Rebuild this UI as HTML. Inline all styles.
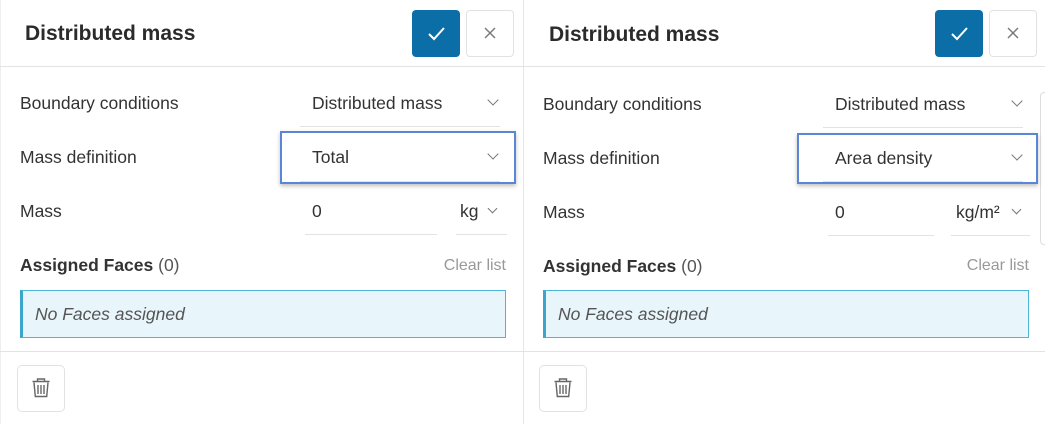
<!DOCTYPE html>
<html><head><style>
*{margin:0;padding:0;box-sizing:border-box}
body{width:1045px;height:424px;background:#fff;position:relative;overflow:hidden;font-family:"Liberation Sans",sans-serif;color:#333}
.a{position:absolute}
.t{position:absolute;font-size:17.5px;line-height:20px;color:#333;white-space:nowrap}
.title{font-size:21px;font-weight:bold;color:#2b2b2b}
.ul{position:absolute;height:1px;background:#e3e3e3}
.chev{position:absolute;width:8px;height:8px;border-right:1.3px solid #777;border-bottom:1.3px solid #777;transform:rotate(45deg)}
.hl{position:absolute;border:2.5px solid #5b86d6;box-shadow:0 2px 4px rgba(0,0,0,.25)}
.ok{position:absolute;background:#0b6ea6;border-radius:4px;width:48px;height:47px}
.x{position:absolute;border:1px solid #e2e2e2;border-radius:4px;width:48px;height:47px}
.box{position:absolute;background:#e8f5fb;border:1px solid #4db6d8;border-left:3px solid #3aa6cc;height:48px}
.box span{position:absolute;left:12px;top:13px;font-style:italic;color:#555;font-size:17.5px}
.trash{position:absolute;border:1px solid #e2e2e2;border-radius:5px;width:48px;height:47px}
.cl{position:absolute;font-size:16px;color:#999;text-align:right;width:100px;line-height:20px}
</style></head><body>
<div class="a" style="left:523px;top:0;width:1px;height:424px;background:#e6e6e6"></div>
<div class="a" style="left:0;top:0;width:1px;height:424px;background:#eee"></div>
<div class="a" style="left:0;top:66px;width:1045px;height:1px;background:#e3e3e3"></div>
<div class="a" style="left:0;top:351px;width:1045px;height:1px;background:#e3e3e3"></div>
<div class="a" style="left:1040px;top:92px;width:8px;height:153px;border:1px solid #ddd;border-radius:6px"></div>

<!-- left panel -->
<div class="t title" style="left:25px;top:24px">Distributed mass</div>
<div class="ok" style="left:412px;top:10px"><svg width="48" height="47"><path d="M17 24l5 5 10-11" stroke="#fff" stroke-width="2" fill="none"/></svg></div>
<div class="x" style="left:466px;top:10px"><svg width="46" height="45"><path d="M18 17l10 10M28 17l-10 10" stroke="#777" stroke-width="1.4"/></svg></div>
<div class="t" style="left:20px;top:93px">Boundary conditions</div>
<div class="t" style="left:312px;top:93px">Distributed mass</div>
<div class="chev" style="left:489px;top:96px"></div>
<div class="ul" style="left:300px;top:126px;width:200px"></div>
<div class="t" style="left:20px;top:147px">Mass definition</div>
<div class="hl" style="left:280px;top:131px;width:236px;height:53px"></div>
<div class="t" style="left:312px;top:147px">Total</div>
<div class="chev" style="left:489px;top:150px"></div>
<div class="ul" style="left:300px;top:181px;width:200px"></div>
<div class="t" style="left:20px;top:201px">Mass</div>
<div class="t" style="left:312px;top:201px">0</div>
<div class="ul" style="left:305px;top:234px;width:132px"></div>
<div class="t" style="left:460px;top:201px">kg</div>
<div class="chev" style="left:489px;top:205px;width:7px;height:7px"></div>
<div class="ul" style="left:456px;top:234px;width:51px"></div>
<div class="t" style="left:20px;top:255px"><b>Assigned Faces</b> <span style="color:#555">(0)</span></div>
<div class="cl" style="left:406px;top:256px">Clear list</div>
<div class="box" style="left:20px;top:290px;width:486px"><span>No Faces assigned</span></div>
<div class="trash" style="left:17px;top:365px"><svg width="46" height="45"><path d="M14.5 15.5h17M19.5 15.5v-2.5h7v2.5M16 16.5l1.3 14h11.4l1.3-14M20 19v9M23 19v9M26 19v9" stroke="#666" stroke-width="1.4" fill="none"/></svg></div>

<!-- right panel -->
<div class="t title" style="left:549px;top:25px">Distributed mass</div>
<div class="ok" style="left:935px;top:10px"><svg width="48" height="47"><path d="M17 24l5 5 10-11" stroke="#fff" stroke-width="2" fill="none"/></svg></div>
<div class="x" style="left:989px;top:10px"><svg width="46" height="45"><path d="M18 17l10 10M28 17l-10 10" stroke="#777" stroke-width="1.4"/></svg></div>
<div class="t" style="left:543px;top:94px">Boundary conditions</div>
<div class="t" style="left:835px;top:94px">Distributed mass</div>
<div class="chev" style="left:1013px;top:97px"></div>
<div class="ul" style="left:823px;top:127px;width:200px"></div>
<div class="t" style="left:543px;top:148px">Mass definition</div>
<div class="hl" style="left:797px;top:133px;width:241px;height:51px"></div>
<div class="t" style="left:835px;top:148px">Area density</div>
<div class="chev" style="left:1013px;top:151px"></div>
<div class="ul" style="left:823px;top:181px;width:200px"></div>
<div class="t" style="left:543px;top:202px">Mass</div>
<div class="t" style="left:835px;top:202px">0</div>
<div class="ul" style="left:828px;top:235px;width:106px"></div>
<div class="t" style="left:956px;top:202px">kg/m²</div>
<div class="chev" style="left:1013px;top:206px;width:7px;height:7px"></div>
<div class="ul" style="left:951px;top:235px;width:79px"></div>
<div class="t" style="left:543px;top:256px"><b>Assigned Faces</b> <span style="color:#555">(0)</span></div>
<div class="cl" style="left:929px;top:256px">Clear list</div>
<div class="box" style="left:543px;top:290px;width:486px"><span>No Faces assigned</span></div>
<div class="trash" style="left:539px;top:365px"><svg width="46" height="45"><path d="M14.5 15.5h17M19.5 15.5v-2.5h7v2.5M16 16.5l1.3 14h11.4l1.3-14M20 19v9M23 19v9M26 19v9" stroke="#666" stroke-width="1.4" fill="none"/></svg></div>
</body></html>
